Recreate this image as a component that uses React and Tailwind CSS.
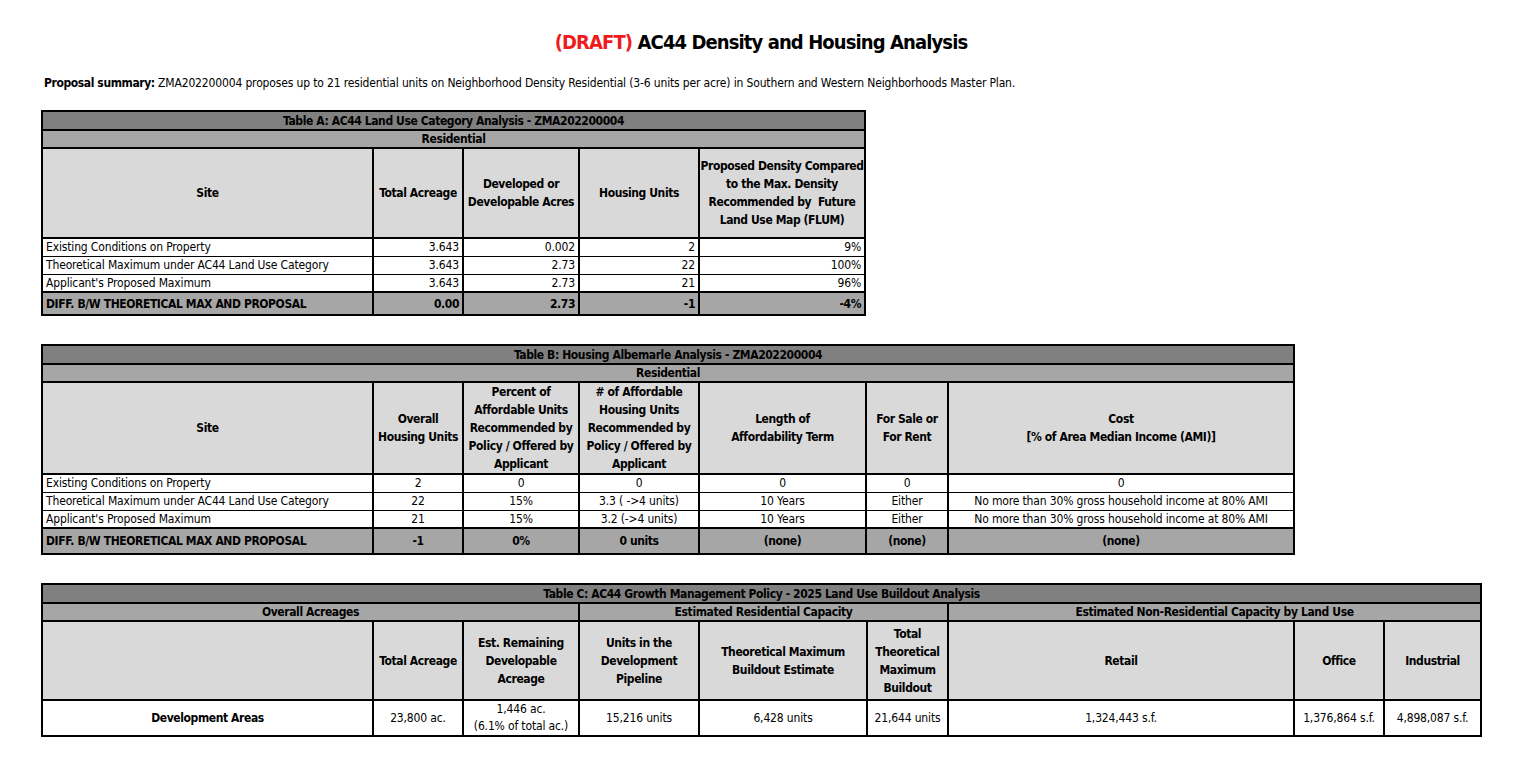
import React from "react";

const F = "font-['DejaVu_Sans_Condensed','Liberation_Sans_Narrow','Roboto',sans-serif]";

const H = "border-2 border-black bg-[#d9d9d9] font-bold tracking-[-0.4px] text-center align-middle leading-[18px] px-0 whitespace-nowrap";
const D = "border-x-2 border-y border-black px-[3px] leading-[16px] whitespace-nowrap";
const DF = "border-x-2 border-y-2 border-black bg-[#a6a6a6] font-bold tracking-[-0.4px] px-[3px] leading-[16px] whitespace-nowrap";
const TB = "font-bold tracking-[-0.4px] text-center leading-[16px] whitespace-nowrap";

function TitleRow({ text, span, h }) {
  return (
    <tr className={h}>
      <td colSpan={span} className={"border-2 border-black bg-[#808080] " + TB}>{text}</td>
    </tr>
  );
}

function TableA() {
  const rows = [
    ["Existing Conditions on Property", "3.643", "0.002", "2", "9%"],
    ["Theoretical Maximum under AC44 Land Use Category", "3.643", "2.73", "22", "100%"],
    ["Applicant's Proposed Maximum", "3.643", "2.73", "21", "96%"],
  ];
  return (
    <table className="table-fixed border-collapse border-2 border-black w-[823px]">
      <colgroup>
        <col className="w-[331px]" />
        <col className="w-[90px]" />
        <col className="w-[116px]" />
        <col className="w-[120px]" />
        <col className="w-[166px]" />
      </colgroup>
      <tbody>
        <TitleRow text="Table A: AC44 Land Use Category Analysis - ZMA202200004" span={5} h="h-[19px]" />
        <tr className="h-[18px]">
          <td colSpan={5} className={"border-2 border-black bg-[#a6a6a6] " + TB}>Residential</td>
        </tr>
        <tr className="h-[90px]">
          <td className={H}>Site</td>
          <td className={H}>Total Acreage</td>
          <td className={H}>Developed or<br />Developable Acres</td>
          <td className={H}>Housing Units</td>
          <td className={H}>Proposed Density Compared<br />to the Max. Density<br />Recommended by&nbsp; Future<br />Land Use Map (FLUM)</td>
        </tr>
        {rows.map((r, i) => (
          <tr key={i} className="h-[18px]">
            <td className={D + " text-left"}>{r[0]}</td>
            <td className={D + " text-right"}>{r[1]}</td>
            <td className={D + " text-right"}>{r[2]}</td>
            <td className={D + " text-right"}>{r[3]}</td>
            <td className={D + " text-right"}>{r[4]}</td>
          </tr>
        ))}
        <tr className="h-[23px]">
          <td className={DF + " text-left"}>DIFF. B/W THEORETICAL MAX AND PROPOSAL</td>
          <td className={DF + " text-right"}>0.00</td>
          <td className={DF + " text-right"}>2.73</td>
          <td className={DF + " text-right"}>-1</td>
          <td className={DF + " text-right"}>-4%</td>
        </tr>
      </tbody>
    </table>
  );
}

function TableB() {
  const rows = [
    ["Existing Conditions on Property", "2", "0", "0", "0", "0", "0"],
    ["Theoretical Maximum under AC44 Land Use Category", "22", "15%", "3.3 ( ->4 units)", "10 Years", "Either", "No more than 30% gross household income at 80% AMI"],
    ["Applicant's Proposed Maximum", "21", "15%", "3.2 (->4 units)", "10 Years", "Either", "No more than 30% gross household income at 80% AMI"],
  ];
  return (
    <table className="table-fixed border-collapse border-2 border-black w-[1252px]">
      <colgroup>
        <col className="w-[331px]" />
        <col className="w-[90px]" />
        <col className="w-[116px]" />
        <col className="w-[120px]" />
        <col className="w-[167px]" />
        <col className="w-[82px]" />
        <col className="w-[346px]" />
      </colgroup>
      <tbody>
        <TitleRow text="Table B: Housing Albemarle Analysis - ZMA202200004" span={7} h="h-[19px]" />
        <tr className="h-[18px]">
          <td colSpan={7} className={"border-2 border-black bg-[#a6a6a6] " + TB}>Residential</td>
        </tr>
        <tr className="h-[90px]">
          <td className={H}>Site</td>
          <td className={H}>Overall<br />Housing Units</td>
          <td className={H}>Percent of<br />Affordable Units<br />Recommended by<br />Policy / Offered by<br />Applicant</td>
          <td className={H}># of Affordable<br />Housing Units<br />Recommended by<br />Policy / Offered by<br />Applicant</td>
          <td className={H}>Length of<br />Affordability Term</td>
          <td className={H}>For Sale or<br />For Rent</td>
          <td className={H}>Cost<br />[% of Area Median Income (AMI)]</td>
        </tr>
        {rows.map((r, i) => (
          <tr key={i} className="h-[18px]">
            {r.map((c, j) => (
              <td key={j} className={D + (j === 0 ? " text-left" : " text-center")}>{c}</td>
            ))}
          </tr>
        ))}
        <tr className="h-[26px]">
          <td className={DF + " text-left"}>DIFF. B/W THEORETICAL MAX AND PROPOSAL</td>
          <td className={DF + " text-center"}>-1</td>
          <td className={DF + " text-center"}>0%</td>
          <td className={DF + " text-center"}>0 units</td>
          <td className={DF + " text-center"}>(none)</td>
          <td className={DF + " text-center"}>(none)</td>
          <td className={DF + " text-center"}>(none)</td>
        </tr>
      </tbody>
    </table>
  );
}

function TableC() {
  const G = "border-2 border-black bg-[#a6a6a6] " + TB;
  const C = "border-2 border-black text-center align-middle leading-[17px] whitespace-nowrap px-0";
  return (
    <table className="table-fixed border-collapse border-2 border-black w-[1439px]">
      <colgroup>
        <col className="w-[331px]" />
        <col className="w-[90px]" />
        <col className="w-[116px]" />
        <col className="w-[120px]" />
        <col className="w-[168px]" />
        <col className="w-[81px]" />
        <col className="w-[346px]" />
        <col className="w-[90px]" />
        <col className="w-[97px]" />
      </colgroup>
      <tbody>
        <TitleRow text="Table C: AC44 Growth Management Policy - 2025 Land Use Buildout Analysis" span={9} h="h-[19px]" />
        <tr className="h-[18px]">
          <td colSpan={3} className={G}>Overall Acreages</td>
          <td colSpan={3} className={G}>Estimated Residential Capacity</td>
          <td colSpan={3} className={G}>Estimated Non-Residential Capacity by Land Use</td>
        </tr>
        <tr className="h-[79px]">
          <td className={H}></td>
          <td className={H}>Total Acreage</td>
          <td className={H}>Est. Remaining<br />Developable<br />Acreage</td>
          <td className={H}>Units in the<br />Development<br />Pipeline</td>
          <td className={H}>Theoretical Maximum<br />Buildout Estimate</td>
          <td className={H}>Total<br />Theoretical<br />Maximum<br />Buildout</td>
          <td className={H}>Retail</td>
          <td className={H}>Office</td>
          <td className={H}>Industrial</td>
        </tr>
        <tr className="h-[35px]">
          <td className={C + " font-bold tracking-[-0.4px]"}>Development Areas</td>
          <td className={C}>23,800 ac.</td>
          <td className={C}>1,446 ac.<br />(6.1% of total ac.)</td>
          <td className={C}>15,216 units</td>
          <td className={C}>6,428 units</td>
          <td className={C}>21,644 units</td>
          <td className={C}>1,324,443 s.f.</td>
          <td className={C}>1,376,864 s.f.</td>
          <td className={C}>4,898,087 s.f.</td>
        </tr>
      </tbody>
    </table>
  );
}

export default function App() {
  return (
    <div className={`${F} w-[1540px] h-[764px] bg-white text-black overflow-hidden text-[12px] tracking-[-0.15px]`}>
      <div className="w-[1522px] pt-[29px] text-center">
        <h1 className="text-[20px] font-bold leading-[26px] tracking-[-0.9px]">
          <span className="text-[#ee1c1c]">(DRAFT)</span> AC44 Density and Housing Analysis
        </h1>
      </div>
      <p className="pl-[44px] mt-[20px] leading-[16px]">
        <span className="font-bold tracking-[-0.4px]">Proposal summary:</span> ZMA202200004 proposes up to 21 residential units on Neighborhood Density Residential (3-6 units per acre) in Southern and Western Neighborhoods Master Plan.
      </p>
      <div className="pl-[41px] mt-[19px] flex flex-col gap-[28px]">
        <TableA />
        <TableB />
        <TableC />
      </div>
    </div>
  );
}
